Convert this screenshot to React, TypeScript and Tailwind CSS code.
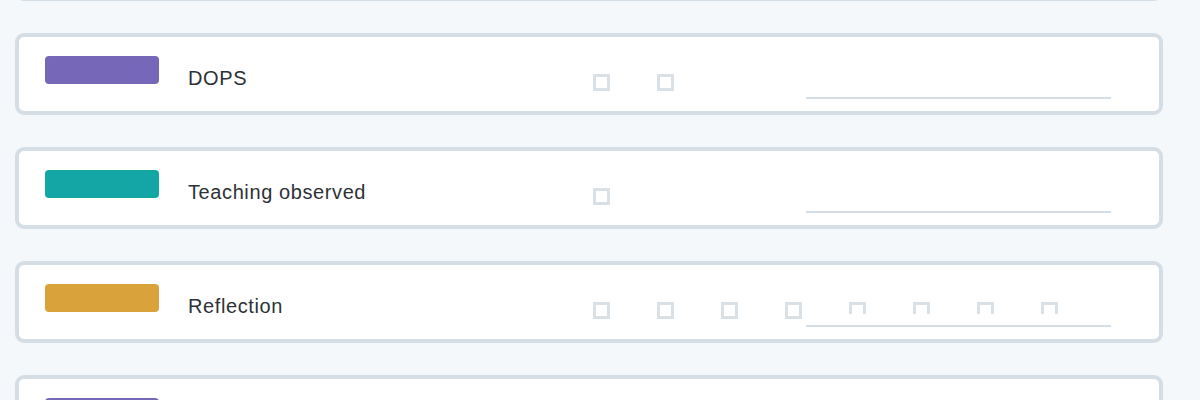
import React from "react";

type Row = { color: string; label: string; boxes: number };

const rows: Row[] = [
  { color: "bg-[#7767b9]", label: "", boxes: 1 },
  { color: "bg-[#7767b9]", label: "DOPS", boxes: 2 },
  { color: "bg-[#14a5a5]", label: "Teaching observed", boxes: 1 },
  { color: "bg-[#d9a23b]", label: "Reflection", boxes: 8 },
  { color: "bg-[#7767b9]", label: "", boxes: 2 },
];

function Card({ row }: { row: Row }) {
  return (
    <div className="relative h-[82px] w-[1148px] shrink-0 rounded-[9px] border-4 border-[#d6dee5] bg-white">
      <div className="flex items-start pl-[26px] pt-[19px]">
        <div className={`h-[28px] w-[114px] shrink-0 rounded-[4px] ${row.color}`} />
        <div className="ml-[29px] mt-[10px] h-[24px] w-[405px] shrink-0 text-[20px] leading-[24px] tracking-[0.6px] text-[#2c3237]">
          {row.label}
        </div>
        <div className="mt-[18px] flex">
          {Array.from({ length: row.boxes }).map((_, i) => (
            <div key={i} className="w-[64px] shrink-0">
              <div className="h-[17px] w-[17px] border-[3px] border-[#d9e1e7] bg-white" />
            </div>
          ))}
        </div>
      </div>
      <div className="absolute left-[787px] top-[49px] h-[13px] w-[305px] border-b-2 border-[#d6dee5] bg-white" />
    </div>
  );
}

export default function App() {
  return (
    <div
      className="h-[400px] w-[1200px] overflow-hidden bg-[#f5f8fa]"
      style={{ fontFamily: '"Liberation Sans", Arial, sans-serif' }}
    >
      <div className="ml-[15px] mt-[-81px] flex flex-col gap-[32px]">
        {rows.map((r, i) => (
          <Card key={i} row={r} />
        ))}
      </div>
    </div>
  );
}
